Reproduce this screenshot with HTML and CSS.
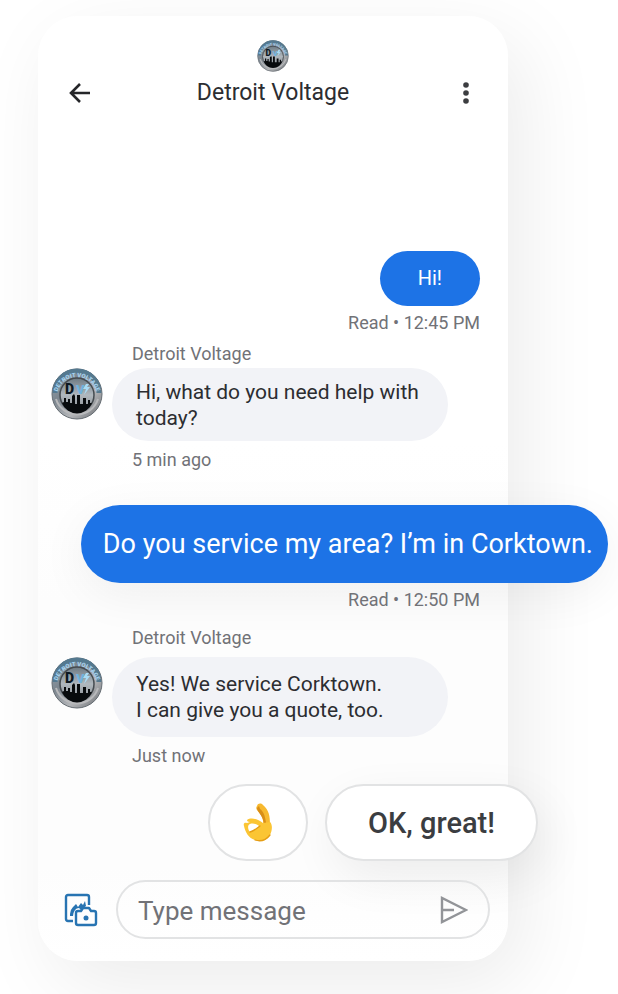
FILE: index.html
```html
<!DOCTYPE html>
<html lang="en">
<head>
<meta charset="utf-8">
<meta name="viewport" content="width=device-width, initial-scale=1">
<title>Detroit Voltage</title>
<link rel="stylesheet" href="styles.css">
</head>
<body>
<svg class="defs" aria-hidden="true">
  <defs>
    <linearGradient id="rim" x1="0" y1="0" x2="1" y2="1">
      <stop offset="0" stop-color="#9aa9b6"/><stop offset=".35" stop-color="#7c868f"/>
      <stop offset=".65" stop-color="#b3b5b8"/><stop offset="1" stop-color="#686b6f"/>
    </linearGradient>
    <linearGradient id="sky" x1="0" y1="0" x2="0" y2="1">
      <stop offset="0" stop-color="#6d7a83"/><stop offset=".5" stop-color="#b0b8be"/><stop offset="1" stop-color="#85898d"/>
    </linearGradient>
    <path id="arc" d="M6 29A20 20 0 0 1 46 29"/>
    <symbol id="logo" viewBox="0 0 52 52">
      <circle cx="26" cy="26" r="25" fill="url(#rim)" stroke="#656c72" stroke-width="1"/>
      <path d="M4 25A22 22 0 0 1 48 25" fill="none" stroke="#55798f" stroke-width="5"/>
      <path d="M5 31A22 22 0 0 0 47 31" fill="none" stroke="#b8b9bb" stroke-width="2"/>
      <circle cx="26" cy="27" r="17" fill="url(#sky)" stroke="#454b50" stroke-width="1.5"/>
      <text font-family="Roboto, sans-serif" font-size="6" font-weight="900" fill="#a4d2f0"><textPath href="#arc" startOffset="50%" text-anchor="middle">DETROIT VOLTAGE</textPath></text>
      <path d="M11 35l2-1v-4h2v4h2v-3h2v4h2v-7l2-2 1 2v8h2v-9h3v9h3v-6h3v6h2v-4h2v3h2a16 16 0 0 1-30 0z" fill="#080b0d"/>
      <text x="14" y="26" font-family="Roboto, sans-serif" font-size="14" font-weight="900" fill="#0c1822">D</text>
      <text x="25" y="26" font-family="Roboto, sans-serif" font-size="13" font-weight="900" fill="#6fb2de">V</text>
      <path d="M35 16l-3 5h3l-2 6 6-8h-3l2-3z" fill="#a9dcf5"/>
    </symbol>
  </defs>
</svg>

<main class="phone">
  <header class="header">
    <svg class="header-logo" aria-hidden="true"><use href="#logo"/></svg>
    <div class="bar">
      <button class="icon-button" aria-label="Back">
        <svg width="24" height="24" viewBox="0 0 24 24" fill="none" stroke="#252629" stroke-width="2.6"><path d="M22 12H4M12 3l-9 9 9 9"/></svg>
      </button>
      <h1 class="title">Detroit Voltage</h1>
      <button class="icon-button" aria-label="More options">
        <svg width="24" height="24" viewBox="0 0 24 24" fill="#3c3d40"><circle cx="12" cy="4" r="2.8"/><circle cx="12" cy="12" r="2.8"/><circle cx="12" cy="20" r="2.8"/></svg>
      </button>
    </div>
  </header>

  <section class="chat" aria-label="Conversation">
    <p class="bubble sent">Hi!</p>
    <p class="meta read">Read • 12:45 PM</p>
    <article class="received">
      <p class="meta name">Detroit Voltage</p>
      <svg class="avatar" aria-hidden="true"><use href="#logo"/></svg>
      <p class="bubble reply">Hi, what do you need help with today?</p>
      <p class="meta time">5 min ago</p>
    </article>
    <p class="bubble sent featured">Do you service my area? I’m in Corktown.</p>
    <p class="meta read">Read • 12:50 PM</p>
    <article class="received roomy">
      <p class="meta name">Detroit Voltage</p>
      <svg class="avatar" aria-hidden="true"><use href="#logo"/></svg>
      <p class="bubble reply">Yes! We service Corktown.<br>I can give you a quote, too.</p>
      <p class="meta time">Just now</p>
    </article>
  </section>

  <div class="suggestions">
    <button class="chip emoji" aria-label="OK hand">
      <svg width="32" height="42" viewBox="0 0 32 42">
        <path d="M15 4C16 1 19 1 21 3c6 5 7 11 7 20l-7 2c1-7-1-12-6-17-1-1-1-3 0-4z" fill="#f7b92f"/>
        <path d="M15 6c0 4 6 7 7 16l2-1c-1-8-3-12-6-14l-1-3z" fill="#d98e17"/>
        <path fill-rule="evenodd" d="M5 18c4-3 11-1 16 3l7-1c3 3 2 9 0 13-3 6-9 7-15 5C6 36 3 29 2 24c-1-3 1-4 3-3l3-1c-2 0-3-1-3-2zM8 22c-3 1-2 6 0 8 3-1 8-4 9-6-2-2-6-3-9-2z" fill="#fbc534"/>
        <path d="M8 30c4-1 7-4 10-6M13 38c6 2 11 0 15-5" fill="none" stroke="#e59d15" stroke-width="1.3" stroke-linecap="round"/>
      </svg>
    </button>
    <button class="chip answer">OK, great!</button>
  </div>

  <form class="composer">
    <button class="attach" type="button" aria-label="Attach a photo">
      <svg width="34" height="34" viewBox="0 0 34 34" fill="none" stroke="#2874b2" stroke-width="2.4" stroke-linejoin="round">
        <path d="M9 28H4Q2 28 2 26V4Q2 2 4 2H23Q25 2 25 4V12"/>
        <path d="M6 21q0-4 3-7l3-3 2 3 3-4 2 2 2-4 1 5-5 4-2-2q-5 0-6 8H6z" fill="#2874b2" stroke="none"/>
        <path d="M14 18h3l2-3h6l2 3h3q2 0 2 2v10q0 2-2 2H14q-2 0-2-2V20q0-2 2-2z"/>
        <circle cx="22" cy="25" r="2.5" fill="#2874b2" stroke="none"/>
      </svg>
    </button>
    <div class="field">
      <input class="message" type="text" aria-label="Type message" placeholder="Type message">
      <button class="send" type="submit" aria-label="Send">
        <svg width="28" height="28" viewBox="0 0 28 28" fill="none" stroke="#929498" stroke-width="2.4"><path d="M2 2v24l24-12zM2 14h12"/></svg>
      </button>
    </div>
  </form>
</main>
</body>
</html>
```
FILE: styles.css
```css
* { box-sizing: border-box; }

body {
  margin: 0;
  padding: 16px 110px 33px 38px;
  background: #fff;
  color: #2c2d31;
  font-family: Roboto, sans-serif;
  overflow-x: hidden;
}

p, h1 { margin: 0; }

button {
  padding: 0;
  border: 0;
  background: none;
  color: inherit;
  font-family: inherit;
}

svg { display: block; }
.defs { position: absolute; width: 0; height: 0; }

.phone {
  padding: 24px 0 22px;
  border-radius: 40px;
  background: linear-gradient(#fff 45%, #fdfdfd 62%, #fdfdfd 90%, #fff);
  box-shadow: 16px 24px 80px rgba(0, 0, 0, 0.08);
}

.header-logo { width: 32px; height: 32px; margin: 0 auto; }

.bar {
  display: flex;
  align-items: center;
  justify-content: space-between;
  height: 42px;
  padding: 0 30px;
}

.icon-button { display: grid; place-items: center; width: 24px; height: 24px; }
.title { font-size: 23px; font-weight: 400; line-height: 30px; }

.chat {
  display: flex;
  flex-direction: column;
  padding: 137px 28px 0 14px;
}

.bubble { border-radius: 40px; }

.sent {
  align-self: flex-end;
  padding: 14px 38px;
  background: #1d73e6;
  color: #fff;
  font-size: 20px;
  line-height: 27px;
}

.featured {
  margin: 35px -128px 0 0;
  padding: 24px 15px 24px 22px;
  font-size: 27px;
  line-height: 30px;
  white-space: nowrap;
  box-shadow: 0 12px 48px rgba(0, 0, 0, 0.06);
}

.meta { color: #717277; font-size: 18px; line-height: 20px; }
.read { align-self: flex-end; margin-top: 7px; }

.received {
  display: grid;
  grid-template-columns: 50px 336px;
  column-gap: 10px;
  margin-top: 11px;
}

.name, .time { grid-column: 2; padding-left: 20px; }
.avatar { width: 52px; height: 52px; margin: 4px 0 0 -1px; }

.reply {
  margin-top: 4px;
  padding: 11px 24px 10px;
  background: #f2f3f7;
  font-size: 21px;
  line-height: 26px;
}

.time { margin-top: 9px; }

.roomy { margin-top: 18px; }
.roomy .avatar { margin-top: 9px; }
.roomy .reply { margin-top: 9px; padding-top: 14px; padding-bottom: 14px; }

.suggestions {
  display: flex;
  justify-content: flex-end;
  gap: 17px;
  margin: 18px -30px 0 0;
}

.chip {
  display: grid;
  place-items: center;
  height: 77px;
  border: 2px solid #e2e3e4;
  border-radius: 40px;
  background: #fff;
}

.emoji { width: 100px; }

.answer {
  width: 213px;
  color: #3b3d41;
  font-size: 29px;
  font-weight: 500;
  box-shadow: 8px 16px 48px rgba(0, 0, 0, 0.07);
}

.composer {
  display: flex;
  align-items: center;
  gap: 18px;
  margin-top: 19px;
  padding: 0 18px 0 26px;
}

.field {
  display: flex;
  flex: 1;
  align-items: center;
  min-width: 0;
  height: 59px;
  padding: 0 20px;
  border: 2px solid #e2e3e4;
  border-radius: 30px;
}

.message {
  flex: 1;
  min-width: 0;
  padding: 3px 0 0;
  border: 0;
  outline: 0;
  background: none;
  font-family: inherit;
  font-size: 26px;
}

.message::placeholder { color: #717277; opacity: 1; }
```
